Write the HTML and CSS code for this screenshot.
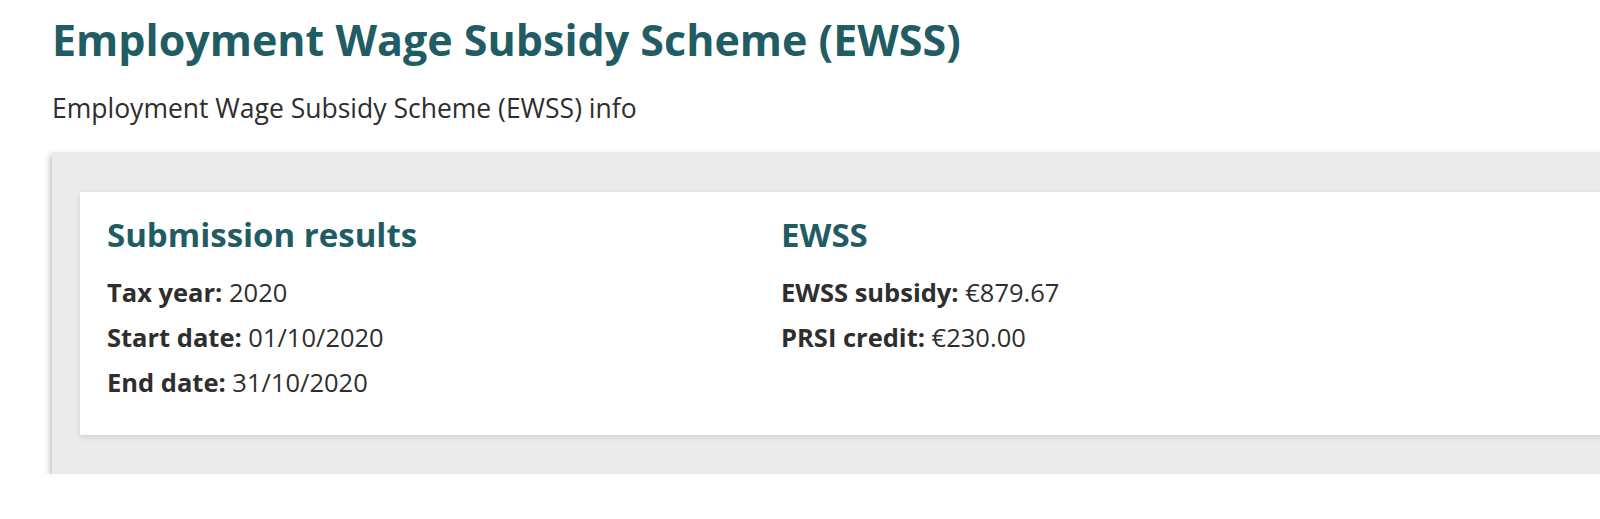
FILE: index.html
```html
<!DOCTYPE html>
<html lang="en">
<head>
    <meta charset="UTF-8">
    <meta name="viewport" content="width=device-width, initial-scale=1.0">
    <title>EWSS</title>
<link rel="stylesheet" href="styles.css">
</head>
<body>
    <div class="page">
        <h1 class="page-title">Employment Wage Subsidy Scheme (EWSS)</h1>
        <p class="page-intro">Employment Wage Subsidy Scheme (EWSS) info</p>
        <div class="panel">
            <div class="card">
                <div class="card-col">
                    <h2 class="card-title">Submission results</h2>
                    <p class="row"><span class="label">Tax year:</span> 2020</p>
                    <p class="row"><span class="label">Start date:</span> 01/10/2020</p>
                    <p class="row"><span class="label">End date:</span> 31/10/2020</p>
                </div>
                <div class="card-col">
                    <h2 class="card-title">EWSS</h2>
                    <p class="row"><span class="label">EWSS subsidy:</span> &euro;879.67</p>
                    <p class="row"><span class="label">PRSI credit:</span> &euro;230.00</p>
                </div>
            </div>
        </div>
    </div>
</body>
</html>
```

FILE: styles.css
```css
* {
    margin: 0;
    padding: 0;
    box-sizing: border-box;
}
body {
    background-color: #ffffff;
    font-family: "Open Sans", "Noto Sans", sans-serif;
    color: #2e2e2e;
    overflow: hidden;
}
.page {
    padding: 12px 0 0 52px;
}
.page-title {
    font-size: 43px;
    font-weight: 700;
    color: #1f5c63;
    line-height: 56px;
}
.page-intro {
    font-size: 26.5px;
    line-height: 36px;
    margin-top: 22px;
}
.panel {
    margin-top: 26px;
    margin-right: -60px;
    background-color: #ebebeb;
    padding: 40px 0 39px 28px;
    box-shadow: -2px 3px 6px rgba(0, 0, 0, 0.25);
}
.card {
    display: flex;
    background-color: #ffffff;
    padding: 21px 27px 30px;
    box-shadow: 0 2px 6px rgba(0, 0, 0, 0.12);
}
.card-col {
    width: 674px;
}
.card-title {
    font-size: 33px;
    font-weight: 700;
    color: #1f5c63;
    line-height: 44px;
    margin-bottom: 13px;
}
.row {
    font-size: 25.5px;
    line-height: 45px;
}
.label {
    font-weight: 700;
}
```
